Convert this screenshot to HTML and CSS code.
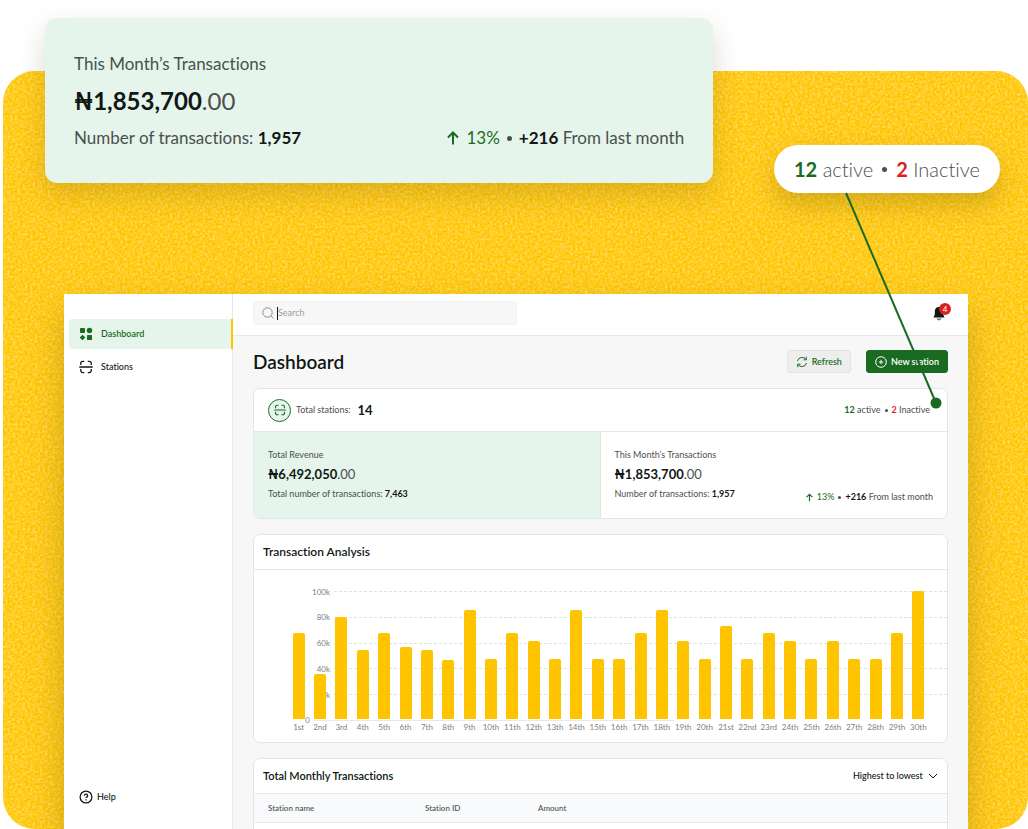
FILE: index.html
```html
<!DOCTYPE html>
<html lang="en">
<head>
<meta charset="utf-8">
<meta name="viewport" content="width=device-width, initial-scale=1">
<title>Dashboard</title>
<link rel="stylesheet" href="styles.css">
</head>
<body>
<svg class="sprite" aria-hidden="true">
  <symbol id="scan" viewBox="0 0 24 24"><path d="M3 8.500V6a3.500 3.500 0 0 1 3.500-3.500H9M15 2.500h2.500A3.500 3.500 0 0 1 21 6v2.500M3 15.500V18a3.500 3.500 0 0 0 3.500 3.500H9M15 21.500h2.500A3.500 3.500 0 0 0 21 18v-2.500M.5 12h23" fill="none" stroke="currentColor" stroke-width="2.200"/></symbol>
  <symbol id="arrow-up" viewBox="0 0 12 14"><path d="M6 13.500V1.500M1 6.500l5-5 5 5" fill="none" stroke="currentColor" stroke-width="2"/></symbol>
</svg>
<div class="stage">
  <svg class="grain" aria-hidden="true">
    <filter id="speckle" x="0" y="0" width="100%" height="100%">
      <feTurbulence type="fractalNoise" baseFrequency="0.4" numOctaves="2" seed="4"/>
      <feColorMatrix values="0 0 0 0 1  0 0 0 0 0.850  0 0 0 0 0.350  2.200 0 0 0 -0.750"/>
    </filter>
    <rect width="100%" height="100%" filter="url(#speckle)"/>
  </svg>
  <div class="window">
    <aside class="sidebar">
      <nav class="nav">
        <a class="nav-item active" href="#"><svg class="nav-icon" viewBox="0 0 14 14"><rect x="1" y="1" width="5" height="5" rx="1"/><circle cx="10.500" cy="3.500" r="2.700"/><path d="M3.500 7.700 6.300 10.500 3.500 13.300.7 10.500z"/><rect x="8" y="8" width="5" height="5" rx=".5"/></svg>Dashboard</a>
        <a class="nav-item" href="#"><svg class="nav-icon"><use href="#scan"/></svg>Stations</a>
      </nav>
      <a class="nav-item help" href="#"><svg class="nav-icon" viewBox="0 0 14 14"><g fill="none" stroke="currentColor" stroke-width="1.300"><circle cx="7" cy="7" r="5.900"/><path d="M5.400 5.800a1.600 1.600 0 1 1 2.400 1.300c-.5.300-.8.500-.8 1M7 9.300v1.200"/></g></svg>Help</a>
    </aside>
    <div class="content">
      <header class="topbar">
        <label class="search">
          <svg class="search-icon" viewBox="0 0 12 12"><circle cx="5.500" cy="5.500" r="4.700"/><path d="m9 9 2.500 2.500"/></svg>
          <span class="caret"></span>
          <input type="text" placeholder="Search" aria-label="Search">
        </label>
        <button class="bell" aria-label="Notifications">
          <svg viewBox="0 0 12 14"><path d="M6 .5c-2.800 0-4.200 2-4.200 4.500v3L.5 11h11L10.200 8V5C10.200 2.500 8.800.5 6 .5z"/><path d="M3.500 12h5c-.3 1.200-1.200 1.800-2.500 1.800S3.800 13.200 3.500 12z" opacity=".6"/></svg>
          <span class="badge">4</span>
        </button>
      </header>
      <main class="main">
        <div class="title-row">
          <h1>Dashboard</h1>
          <button class="btn"><svg viewBox="0 0 12 12"><path d="M1.500 5A4.700 4.700 0 0 1 10 3.500M10.300.800v3H7.500M10.500 7A4.700 4.700 0 0 1 2 8.500M1.700 11.200v-3h2.800"/></svg>Refresh</button>
          <button class="btn primary"><svg viewBox="0 0 12 12"><circle cx="6" cy="6" r="5.300"/><path d="M6 3.800v4.400M3.800 6h4.400"/></svg>New station</button>
        </div>

        <section class="card">
          <div class="stations">
            <span class="round"><svg><use href="#scan"/></svg></span>
            <span>Total stations:</span><strong class="total">14</strong>
            <span class="status"><span><b class="green">12</b> active</span><i class="dot"></i><span><b class="red">2</b> Inactive</span></span>
          </div>
          <div class="stats">
            <div class="stat mint">
              <span class="stat-name">Total Revenue</span>
              <span class="amount"><b>₦6,492,050</b>.00</span>
              <span class="stat-line">Total number of transactions: <b>7,463</b></span>
            </div>
            <div class="stat">
              <span class="stat-name">This Month’s Transactions</span>
              <span class="amount"><b>₦1,853,700</b>.00</span>
              <div class="stat-foot">
                <span class="stat-line">Number of transactions: <b>1,957</b></span>
                <span class="trend"><svg class="green"><use href="#arrow-up"/></svg><span class="green">13%</span><i class="dot"></i><span><b>+216</b> From last month</span></span>
              </div>
            </div>
          </div>
        </section>

        <section class="card">
          <h2 class="card-head">Transaction Analysis</h2>
          <div class="chart">
            <div class="axis">
              <div class="tick"><span>100k</span></div>
              <div class="tick"><span>80k</span></div>
              <div class="tick"><span>60k</span></div>
              <div class="tick"><span>40k</span></div>
              <div class="tick"><span>20k</span></div>
              <div class="tick zero"><span>0</span></div>
            </div>
            <div class="bars">
              <div class="day"><i style="height:67%"></i><span>1st</span></div>
              <div class="day"><i style="height:35%"></i><span>2nd</span></div>
              <div class="day"><i style="height:80%"></i><span>3rd</span></div>
              <div class="day"><i style="height:54%"></i><span>4th</span></div>
              <div class="day"><i style="height:67%"></i><span>5th</span></div>
              <div class="day"><i style="height:56%"></i><span>6th</span></div>
              <div class="day"><i style="height:54%"></i><span>7th</span></div>
              <div class="day"><i style="height:46%"></i><span>8th</span></div>
              <div class="day"><i style="height:85%"></i><span>9th</span></div>
              <div class="day"><i style="height:47%"></i><span>10th</span></div>
              <div class="day"><i style="height:67%"></i><span>11th</span></div>
              <div class="day"><i style="height:61%"></i><span>12th</span></div>
              <div class="day"><i style="height:47%"></i><span>13th</span></div>
              <div class="day"><i style="height:85%"></i><span>14th</span></div>
              <div class="day"><i style="height:47%"></i><span>15th</span></div>
              <div class="day"><i style="height:47%"></i><span>16th</span></div>
              <div class="day"><i style="height:67%"></i><span>17th</span></div>
              <div class="day"><i style="height:85%"></i><span>18th</span></div>
              <div class="day"><i style="height:61%"></i><span>19th</span></div>
              <div class="day"><i style="height:47%"></i><span>20th</span></div>
              <div class="day"><i style="height:73%"></i><span>21st</span></div>
              <div class="day"><i style="height:47%"></i><span>22nd</span></div>
              <div class="day"><i style="height:67%"></i><span>23rd</span></div>
              <div class="day"><i style="height:61%"></i><span>24th</span></div>
              <div class="day"><i style="height:47%"></i><span>25th</span></div>
              <div class="day"><i style="height:61%"></i><span>26th</span></div>
              <div class="day"><i style="height:47%"></i><span>27th</span></div>
              <div class="day"><i style="height:47%"></i><span>28th</span></div>
              <div class="day"><i style="height:67%"></i><span>29th</span></div>
              <div class="day"><i style="height:100%"></i><span>30th</span></div>
            </div>
          </div>
        </section>

        <section class="card">
          <div class="card-head">
            <h2>Total Monthly Transactions</h2>
            <label class="sort">
              <select aria-label="Sort order"><option>Highest to lowest</option><option>Lowest to highest</option></select>
              <svg viewBox="0 0 10 6"><path d="m1 1 4 4 4-4"/></svg>
            </label>
          </div>
          <table class="table">
            <thead><tr><th class="name">Station name</th><th class="id">Station ID</th><th>Amount</th></tr></thead>
            <tbody><tr><td></td><td></td><td></td></tr></tbody>
          </table>
        </section>
      </main>
    </div>
  </div>
</div>

<section class="callout">
  <span class="callout-name">This Month’s Transactions</span>
  <span class="callout-amount"><b>₦1,853,700</b>.00</span>
  <div class="callout-foot">
    <span>Number of transactions: <b>1,957</b></span>
    <span class="callout-trend"><svg class="green"><use href="#arrow-up"/></svg><span class="green">13%</span><i class="dot"></i><span><b>+216</b> From last month</span></span>
  </div>
</section>
<div class="pill"><span><b class="green">12</b> active</span><i class="dot"></i><span><b class="red">2</b> Inactive</span></div>
<svg class="pointer" viewBox="0 0 110 220" aria-hidden="true"><path d="M6 3 96 213" stroke="#1a6b22" stroke-width="2"/><circle cx="96" cy="213" r="5.500" fill="#1a6b22"/></svg>
</body>
</html>
```
FILE: styles.css
```css
* { box-sizing: border-box; }

body {
  position: relative;
  display: flex;
  flex-direction: column;
  height: 100vh;
  margin: 0;
  padding: 71px 0 0 3px;
  overflow: hidden;
  background: #fff;
  color: #101714;
  font-family: Lato, "Open Sans", Inter, sans-serif;
  font-size: 9px;
  font-variant-ligatures: none;
  line-height: 12px;
}

b, strong { font-weight: 700; }
i { font-style: normal; }
h1, h2 { margin: 0; font-weight: 600; }
a { color: inherit; text-decoration: none; }
button, input, select { font: inherit; color: inherit; }
.green { color: #1a6b22; }
.red { color: #d91f1f; }
.sprite { display: none; }

.dot {
  flex: none;
  width: 3px;
  height: 3px;
  border-radius: 50%;
  background: #4a504e;
}

.stage {
  position: relative;
  flex: 1;
  min-height: 0;
  padding: 223px 60px 0 61px;
  overflow: hidden;
  border-radius: 32px;
  background: #ffc400;
}

.grain {
  position: absolute;
  inset: 0;
  width: 100%;
  height: 100%;
  opacity: 0.6;
}

.window {
  position: relative;
  display: flex;
  height: 100%;
  background: #fff;
  box-shadow: 0 16px 32px rgba(110, 85, 0, 0.35);
}

/* Sidebar */
.sidebar {
  display: flex;
  flex: none;
  flex-direction: column;
  justify-content: space-between;
  width: 169px;
  padding: 25px 0 17px 5px;
  border-right: 1px solid #e8e8e8;
}

.nav { display: grid; gap: 3px; margin-right: -1px; }

.nav-item {
  display: flex;
  align-items: center;
  gap: 8px;
  height: 30px;
  padding-left: 10px;
  border-radius: 3px 0 0 3px;
  font-weight: 500;
}

.nav-item.active {
  border-right: 2px solid #ffc400;
  background: #e5f5eb;
  color: #1a6b22;
  font-weight: 600;
}

.nav-icon { width: 14px; height: 14px; fill: currentColor; }
.help { gap: 4px; }

/* Top bar */
.content { display: flex; flex: 1; flex-direction: column; min-width: 0; }

.topbar {
  display: flex;
  flex: none;
  align-items: center;
  justify-content: space-between;
  height: 42px;
  padding: 0 20px 3px;
  border-bottom: 1px solid #e8e8e8;
}

.search {
  display: flex;
  align-items: center;
  width: 264px;
  height: 24px;
  padding-left: 8px;
  border: 1px solid #f1f1f1;
  border-radius: 3px;
  background: #f7f7f7;
}

.search-icon { width: 12px; height: 12px; fill: none; stroke: #858a88; }
.caret { width: 1px; height: 13px; margin-left: 3px; background: #101714; }
.search input { flex: 1; min-width: 0; padding: 0; border: 0; outline: 0; background: none; }
.search input::placeholder { color: #9a9e9c; opacity: 1; }

.bell { position: relative; display: flex; margin-right: 3px; padding: 0; border: 0; background: none; }
.bell svg { width: 12px; height: 15px; fill: #101714; }
.badge {
  position: absolute;
  top: -3px;
  right: -6px;
  width: 12px;
  height: 12px;
  border-radius: 50%;
  background: #d91f1f;
  color: #fff;
  font-size: 8px;
}

/* Main column */
.main {
  display: flex;
  flex: 1;
  flex-direction: column;
  gap: 15px;
  min-height: 0;
  padding: 14px 20px 0;
  overflow: hidden;
  background: #f7f7f7;
}

.title-row { display: flex; flex: none; align-items: center; gap: 15px; height: 23px; }
.title-row h1 { margin-right: auto; font-size: 19px; line-height: 24px; }

.btn {
  display: flex;
  align-items: center;
  gap: 4px;
  height: 23px;
  padding: 0 8px;
  border: 1px solid #e2e2e2;
  border-radius: 3px;
  background: #eee;
  color: #1a6b22;
  font-weight: 600;
}
.btn svg { width: 12px; height: 12px; fill: none; stroke: currentColor; }
.btn.primary { border-color: #1a6b22; background: #1a6b22; color: #fff; }

.card {
  flex: none;
  overflow: hidden;
  border: 1px solid #e4e4e4;
  border-radius: 7px;
  background: #fff;
}

.card-head {
  display: flex;
  align-items: center;
  justify-content: space-between;
  height: 35px;
  padding: 0 9px;
  border-bottom: 1px solid #e8e8e8;
  font-size: 12px;
}
.card-head h2 { font-size: 11px; }

.stations {
  display: flex;
  align-items: center;
  gap: 5px;
  height: 43px;
  padding: 0 17px 0 14px;
  border-bottom: 1px solid #e8e8e8;
  color: #4a504e;
}

.round {
  display: grid;
  place-items: center;
  width: 23px;
  height: 23px;
  border: 1px solid #1a6b22;
  border-radius: 50%;
  background: #e5f5eb;
  color: #1a6b22;
}
.round svg { width: 12px; height: 12px; }
.total { padding-left: 2px; color: #101714; font-size: 13px; }
.status { display: flex; align-items: center; gap: 4px; margin-left: auto; }

.stats { display: grid; grid-template-columns: 1fr 1fr; }
.stat {
  display: flex;
  flex-direction: column;
  gap: 6px;
  min-height: 86px;
  padding: 17px 14px 14px;
  color: #4a504e;
}
.stat.mint { border-right: 1px solid #dfe6e2; background: #e5f5eb; }
.stat b { color: #101714; }
.amount { font-size: 13px; line-height: 15px; }
.stat-foot { display: flex; align-items: flex-start; justify-content: space-between; }
.trend { display: flex; align-items: center; gap: 4px; padding-top: 3px; }
.trend svg { width: 7px; height: 9px; }

/* Chart */
.chart {
  display: grid;
  padding: 21px 0 10px;
  color: #7c817f;
  font-size: 8px;
  line-height: 10px;
}
.axis, .bars { grid-area: 1 / 1; }
.axis { display: flex; flex-direction: column; justify-content: space-between; height: 130px; }
.tick { display: flex; align-items: center; gap: 4px; height: 1px; }
.tick span { width: 76px; text-align: right; }
.tick::after {
  content: "";
  flex: 1;
  height: 1px;
  background: repeating-linear-gradient(90deg, #e0e2e1 0 3px, transparent 3px 5px);
}
.tick.zero span { width: 56px; }
.tick.zero::after { flex: none; width: 52%; background: #e8e8e8; }

.bars {
  display: grid;
  grid-template-columns: repeat(30, minmax(0, 1fr));
  padding: 0 18px 0 34px;
}
.day {
  display: grid;
  grid-template-rows: 128px auto;
  gap: 3px;
  align-items: end;
  justify-items: center;
}
.day i { width: 12px; border-radius: 2px 2px 0 0; background: #ffc400; }

/* Table */
.sort { display: flex; align-items: center; gap: 4px; font-size: 9px; font-weight: 500; }
.sort select { padding: 0; border: 0; outline: 0; appearance: none; background: none; }
.sort svg { width: 10px; height: 6px; fill: none; stroke: #101714; }

.table { width: 100%; border-collapse: collapse; table-layout: fixed; font-size: 8px; }
.table th {
  height: 28px;
  padding: 0;
  border-bottom: 1px solid #e8e8e8;
  background: #f9fafb;
  color: #4a504e;
  font-weight: 500;
  text-align: left;
}
.table .name { width: 171px; padding-left: 14px; }
.table .id { width: 113px; }
.table td { height: 34px; }

/* Floating callouts */
.callout {
  position: absolute;
  top: 18px;
  left: 45px;
  display: flex;
  flex-direction: column;
  gap: 12px;
  width: 65%;
  padding: 34px 29px 33px;
  border-radius: 12px;
  background: #e5f5eb;
  box-shadow: 0 12px 28px rgba(60, 50, 0, 0.18);
  color: #4a504e;
  font-size: 17px;
  line-height: 24px;
}
.callout b { color: #101714; }
.callout-amount { font-size: 24px; line-height: 26px; }
.callout-foot { display: flex; justify-content: space-between; }
.callout-trend, .pill { display: flex; align-items: center; gap: 7px; }
.callout-trend svg { width: 12px; height: 14px; }
.callout .dot, .pill .dot { width: 5px; height: 5px; }

.pill {
  position: absolute;
  top: 145px;
  right: 28px;
  justify-content: center;
  gap: 9px;
  width: 226px;
  height: 48px;
  border-radius: 24px;
  background: #fff;
  box-shadow: 0 12px 24px rgba(90, 70, 0, 0.25);
  color: #4a504e;
  font-size: 20px;
  font-weight: 300;
  line-height: 24px;
}

.pointer {
  position: absolute;
  top: 190px;
  right: 78px;
  width: 110px;
  height: 220px;
}
```
